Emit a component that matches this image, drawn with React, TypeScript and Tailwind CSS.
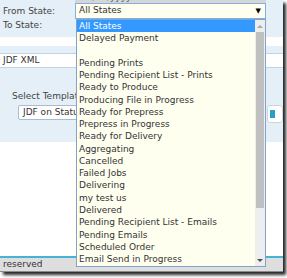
import React from 'react';

const states = [
  'All States',
  'Delayed Payment',
  '',
  'Pending Prints',
  'Pending Recipient List - Prints',
  'Ready to Produce',
  'Producing File in Progress',
  'Ready for Prepress',
  'Prepress in Progress',
  'Ready for Delivery',
  'Aggregating',
  'Cancelled',
  'Failed Jobs',
  'Delivering',
  'my test us',
  'Delivered',
  'Pending Recipient List - Emails',
  'Pending Emails',
  'Scheduled Order',
  'Email Send in Progress',
];

const StateList: React.FC = () => (
  <div className="absolute left-[76px] top-[19px] w-[190px] h-[248px] border border-[#7fa4cc] bg-[#fffff0] flex">
    <ul className="w-[178px]">
      {states.map((s, i) => (
        <li
          key={i}
          className={`h-[12.27px] leading-[12.27px] pl-[2px] whitespace-nowrap ${
            i === 0 ? 'bg-[#3399ff] text-white' : 'text-[#333]'
          }`}
        >
          {s}
        </li>
      ))}
    </ul>
    <div className="w-[10px] bg-[#eeeeee] flex flex-col">
      <div className="h-[12px] flex items-center justify-center">
        <div className="w-0 h-0 border-x-[3px] border-x-transparent border-b-[3px] border-b-[#a8a8a8]" />
      </div>
      <div className="h-[176px] mx-[1px] bg-[#c0c0c0]" />
      <div className="flex-1" />
      <div className="h-[12px] flex items-center justify-center">
        <div className="w-0 h-0 border-x-[3px] border-x-transparent border-t-[3px] border-t-[#505050]" />
      </div>
    </div>
  </div>
);

export default function App() {
  return (
    <div className="min-h-screen bg-white">
      <div className="relative w-[283px] h-[272px] overflow-hidden bg-[#e5eff7] shadow-[3px_3px_3px_rgba(0,0,0,0.85)] font-['DejaVu_Sans',sans-serif] text-[9px]">
        {/* state filter */}
        <div className="flex h-[37px]">
          <div className="w-[75px] pl-[3px] pt-[5px] leading-[13.5px] text-[#444]">
            <div>From State:</div>
            <div>To State:</div>
          </div>
          <div className="w-[191px]">
            <div className="h-[3px] overflow-hidden bg-[#d6d6d6] pl-[2px]">
              <div className="-mt-[9px] leading-[12px] text-[#555]">MM/dd/yyyy</div>
            </div>
            <div className="h-[16px] border border-[#7eb0e6] bg-[#fffff0] flex items-center justify-between pl-[3px] pr-[4px] text-[#333]">
              <span>All States</span>
              <span className="text-[7px] text-black">▼</span>
            </div>
          </div>
        </div>

        <div className="h-[9px] bg-white" />
        <div className="h-[7px]" />
        <div className="h-[15px] border-y border-[#c2d3e4] bg-white pl-[3px] leading-[13px] text-[#333]">JDF XML</div>

        {/* template panel */}
        <div className="h-[74px] pt-[22px]">
          <div className="pl-[12px] leading-[12px] text-[#444]">Select Template:</div>
          <div className="flex items-start mt-[3px]">
            <div className="ml-[18px] w-[232px] h-[15px] border border-[#a9bccf] bg-white rounded-[2px] pl-[4px] leading-[13px] text-[#333]">
              JDF on Status Change
            </div>
            <div className="ml-[6px] w-[16px] h-[18px] shrink-0 border border-[#c9d6e2] bg-white rounded-[3px] flex items-center justify-end pr-[4px]">
              <div className="w-[3px] h-[8px] bg-[#2f6fb6]" />
            </div>
            <div className="ml-[5px] w-[16px] h-[18px] shrink-0 border border-[#c9d6e2] bg-white rounded-[3px] flex items-center pl-[2px]">
              <div className="w-[5px] h-[8px] bg-[#2a9ec4]" />
            </div>
          </div>
        </div>

        <div className="h-[114px] bg-white" />
        <div className="h-[2px] bg-[#44b3d6]" />
        <div className="h-[14px] bg-[#dedede] border-b border-[#8a8a8a] pl-[3px] leading-[13px] text-[#333]">reserved</div>

        <StateList />
      </div>
    </div>
  );
}
